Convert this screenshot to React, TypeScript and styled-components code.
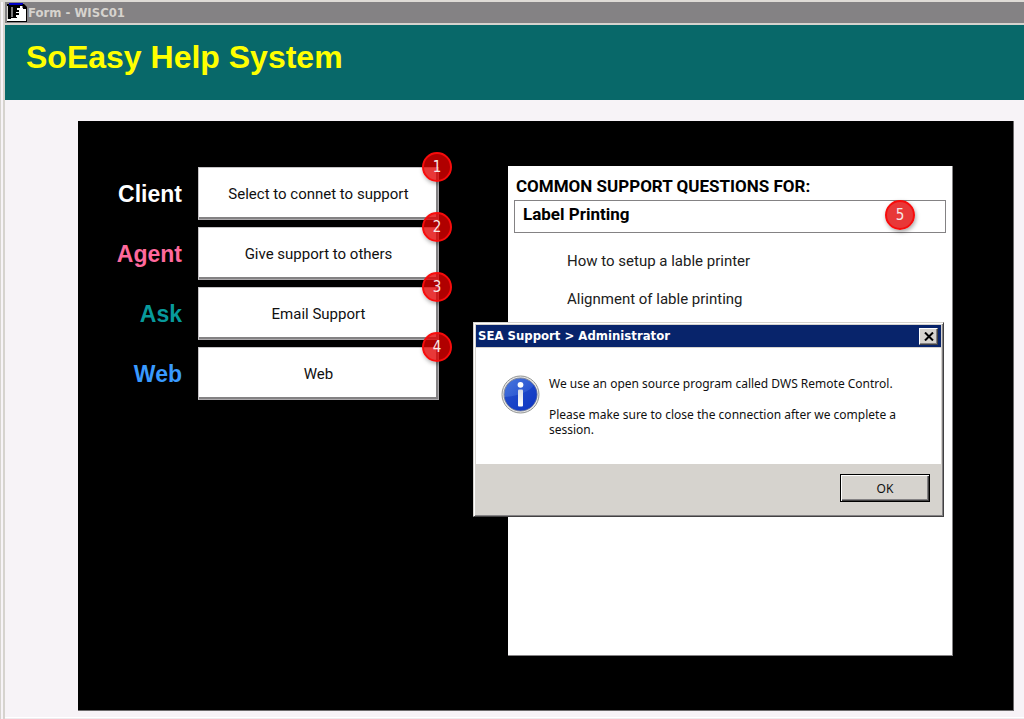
import React from "react";
import styled, { createGlobalStyle } from "styled-components";

const sans = '"Liberation Sans", Arial, sans-serif';
const caption = '"DejaVu Sans Condensed", "DejaVu Sans", Tahoma, sans-serif';
const ui = '"Noto Sans", Tahoma, sans-serif';
const form = 'Roboto, "Liberation Sans", Arial, sans-serif';

const GlobalStyle = createGlobalStyle`
  *, *::before, *::after { box-sizing: border-box; }
  body { margin: 0; background: #f7f3f7; }
`;

const Window = styled.div`
  display: flex;
  flex-direction: column;
  min-height: 100vh;
  border-left: 1px solid #d6d3ce;
  border-top: 2px solid #dedbd6;
  font-family: ${form};
`;

const Frame = styled.div`
  flex: 1;
  display: flex;
  flex-direction: column;
  border-left: 2px solid #d6d3ce;
  box-shadow: inset 0 -1px 0 #efebef, inset 0 -2px 0 #ffffff;
  margin-left: 2px;
`;

const TitleBar = styled.div`
  display: flex;
  align-items: center;
  gap: 1px;
  height: 23px;
  padding-left: 2px;
  background: #848284;
  border-bottom: 2px solid #d6d3ce;
  color: #d6d3ce;
  font: bold 13px/20px ${caption};
`;

const Banner = styled.header`
  height: 75px;
  padding: 12px 21px;
  background: #086869;
`;

const BannerTitle = styled.h1`
  margin: 0;
  color: #ffff00;
  font: bold 32px/40px ${sans};
`;

const Body = styled.main`
  flex: 1;
  display: flex;
  padding: 21px 10px 8px 73px;
`;

const Board = styled.div`
  flex: 1;
  display: grid;
  grid-template-columns: 361px 1fr;
  column-gap: 69px;
  padding: 45px 60px 54px 0;
  background: #000000;
  border: solid #6b696b;
  border-width: 0 1px 1px 0;
`;

const Actions = styled.div`
  display: grid;
  grid-template-columns: 104px 241px;
  column-gap: 16px;
  row-gap: 7px;
  align-content: start;
  padding-top: 1px;
`;

const ActionLabel = styled.label<{ $color: string }>`
  align-self: center;
  text-align: right;
  color: ${(p) => p.$color};
  font: bold 23px/28px ${sans};
`;

const ActionCell = styled.div`
  position: relative;
  display: flex;
`;

const ActionButton = styled.button`
  flex: 1;
  height: 53px;
  padding: 0;
  background: #ffffff;
  border: 1px solid #c6c3c6;
  border-right-color: #adaaad;
  border-bottom-color: #adaaad;
  box-shadow: inset -2px -2px 0 #848284;
  color: #101010;
  font: 15px/20px ${form};
`;

const Badge = styled.span`
  position: absolute;
  top: -15px;
  right: -13px;
  width: 30px;
  height: 30px;
  border: 2px solid #f70c0c;
  border-radius: 50%;
  background: rgba(225, 0, 0, 0.78);
  box-shadow: 1px 2px 4px rgba(0, 0, 0, 0.35);
  color: #f7e7e7;
  text-align: center;
  font: 15px/26px ${caption};
`;

const FieldBadge = styled(Badge)`
  top: 0;
  right: 31px;
`;

const Questions = styled.section`
  position: relative;
  padding: 10px 6px 9px;
  background: #ffffff;
  border: solid #848284;
  border-width: 0 1px 1px 0;
`;

const QuestionsLabel = styled.label`
  display: block;
  padding: 0 2px 4px;
  color: #000000;
  font: bold 17px/20px ${form};
`;

const TopicCell = styled.div`
  position: relative;
  display: flex;
`;

const TopicInput = styled.input`
  flex: 1;
  min-width: 0;
  height: 33px;
  padding: 0 8px 5px;
  border: 1px solid #848284;
  background: #ffffff;
  color: #000000;
  font: bold 17px/20px ${form};
`;

const QuestionList = styled.ul`
  display: grid;
  row-gap: 18px;
  margin: 18px 0 0;
  padding: 0 0 0 53px;
  list-style: none;
`;

const QuestionLink = styled.a`
  display: block;
  color: #202020;
  text-decoration: none;
  font: 15px/20px ${form};
`;

const Dialog = styled.div`
  position: absolute;
  top: 156px;
  left: -35px;
  width: calc(100% + 27px);
  border: 1px solid;
  border-color: #d6d3ce #424142 #424142 #d6d3ce;
  background: #d6d3ce;
  box-shadow: inset 1px 1px 0 #ffffff, inset -1px -1px 0 #848284;
  padding: 2px;
`;

const DialogBar = styled.div`
  display: flex;
  align-items: center;
  justify-content: space-between;
  height: 23px;
  padding: 0 3px 0 2px;
  background: #08246b;
  border-bottom: 1px solid #d6d3ce;
  color: #ffffff;
  font: bold 13px/20px ${caption};
`;

const CloseButton = styled.button`
  display: flex;
  align-items: center;
  justify-content: center;
  width: 19px;
  height: 17px;
  padding: 0;
  background: #d6d3ce;
  border: 1px solid;
  border-color: #ffffff #424142 #424142 #ffffff;
  box-shadow: inset -1px -1px 0 #848284;
`;

const DialogContent = styled.div`
  display: flex;
  align-items: flex-start;
  gap: 9px;
  height: 116px;
  padding: 27px 25px 0;
  background: #ffffff;
  svg { flex: none; }
`;

const DialogText = styled.div`
  padding-top: 1px;
  color: #101010;
  font: 12px/15px ${ui};
  p { margin: 0 0 16px; }
`;

const DialogFooter = styled.div`
  display: flex;
  justify-content: flex-end;
  padding: 10px 11px 12px;
`;

const OkButton = styled.button`
  width: 90px;
  height: 28px;
  padding: 0;
  background: #d6d3ce;
  border: 1px solid #000000;
  box-shadow: inset 1px 1px 0 #ffffff, inset -1px -1px 0 #424142, inset -2px -2px 0 #848284;
  color: #101010;
  font: 12px/15px ${ui};
`;

const FormIcon = () => (
  <svg width="20" height="20" viewBox="0 0 20 20" aria-hidden="true">
    <path d="M0 1h17l3 3v15H0z" fill="#000" />
    <path d="M0 18v-2h4v-1h6v-1h-1v-2h3v-2H9V9h3V7h-2V5h3V3h3v3h3v12z" fill="#fff" />
    <path d="M0 3h1v13H0z" fill="#d6d3ce" />
    <path d="M4 4h2v10H4z" fill="#7b797b" />
    <path d="M2 1h14" stroke="#0000c6" strokeWidth="2" />
    <path d="M16 1v4h3" fill="none" stroke="#000" />
  </svg>
);

const InfoIcon = () => (
  <svg width="39" height="39" viewBox="0 0 39 39" aria-hidden="true">
    <defs>
      <linearGradient id="disc" x1="0" y1="0" x2="1" y2="1">
        <stop offset="0" stopColor="#4a79de" />
        <stop offset="1" stopColor="#1038c6" />
      </linearGradient>
      <linearGradient id="stem" x1="0" y1="0" x2="0" y2="1">
        <stop offset="0" stopColor="#d6dbe7" />
        <stop offset="1" stopColor="#ffffff" />
      </linearGradient>
    </defs>
    <circle cx="19.5" cy="19.5" r="18.5" fill="#e7e7e7" stroke="#949694" />
    <circle cx="19.5" cy="19.5" r="16.5" fill="url(#disc)" stroke="#848a9c" />
    <path d="M3.5 22C12 22 28 18 33 10a16 16 0 0 1-13.5 25.5A16 16 0 0 1 3.5 22z" fill="#0830bd" opacity="0.5" />
    <circle cx="19.5" cy="9.8" r="2.9" fill="#fff" />
    <rect x="17" y="14.5" width="5" height="17" rx="1" fill="url(#stem)" />
  </svg>
);

const actions = [
  { id: "client", label: "Client", color: "#ffffff", text: "Select to connet to support" },
  { id: "agent", label: "Agent", color: "#ff699c", text: "Give support to others" },
  { id: "ask", label: "Ask", color: "#089a9c", text: "Email Support" },
  { id: "web", label: "Web", color: "#399aff", text: "Web" },
];

const questions = ["How to setup a lable printer", "Alignment of lable printing"];

export default function App() {
  return (
    <>
      <GlobalStyle />
      <Window>
        <Frame>
          <TitleBar>
            <FormIcon />
            <span>Form - WISC01</span>
          </TitleBar>
          <Banner>
            <BannerTitle>SoEasy Help System</BannerTitle>
          </Banner>
          <Body>
            <Board>
              <Actions>
                {actions.map((a, i) => (
                  <React.Fragment key={a.id}>
                    <ActionLabel htmlFor={a.id} $color={a.color}>{a.label}</ActionLabel>
                    <ActionCell>
                      <ActionButton id={a.id} type="button">{a.text}</ActionButton>
                      <Badge>{i + 1}</Badge>
                    </ActionCell>
                  </React.Fragment>
                ))}
              </Actions>
              <Questions>
                <QuestionsLabel htmlFor="topic">COMMON SUPPORT QUESTIONS FOR:</QuestionsLabel>
                <TopicCell>
                  <TopicInput id="topic" type="text" defaultValue="Label Printing" />
                  <FieldBadge>5</FieldBadge>
                </TopicCell>
                <QuestionList>
                  {questions.map((q) => (
                    <li key={q}><QuestionLink href="#">{q}</QuestionLink></li>
                  ))}
                </QuestionList>
                <Dialog role="dialog" aria-labelledby="dialog-title">
                  <DialogBar>
                    <span id="dialog-title">SEA Support &gt; Administrator</span>
                    <CloseButton type="button" aria-label="Close">
                      <svg width="10" height="9" viewBox="0 0 10 9" aria-hidden="true">
                        <path d="M1 0.5l8 8M9 0.5l-8 8" stroke="#000" strokeWidth="2" />
                      </svg>
                    </CloseButton>
                  </DialogBar>
                  <DialogContent>
                    <InfoIcon />
                    <DialogText>
                      <p>We use an open source program called DWS Remote Control.</p>
                      <p>Please make sure to close the connection after we complete a session.</p>
                    </DialogText>
                  </DialogContent>
                  <DialogFooter>
                    <OkButton type="button">OK</OkButton>
                  </DialogFooter>
                </Dialog>
              </Questions>
            </Board>
          </Body>
        </Frame>
      </Window>
    </>
  );
}
